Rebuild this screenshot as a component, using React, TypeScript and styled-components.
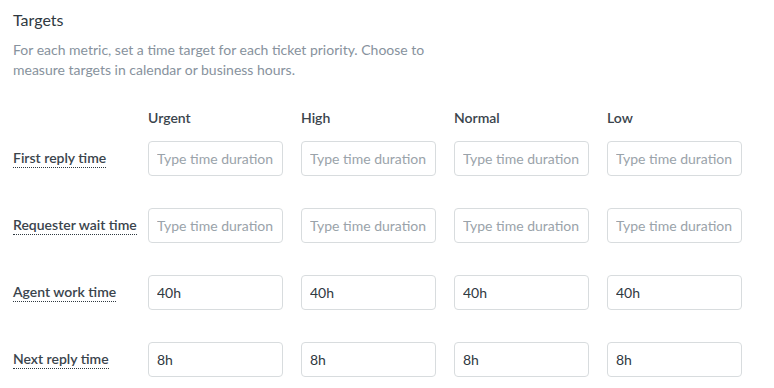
import React from 'react'
import styled, { createGlobalStyle } from 'styled-components'

const GlobalStyle = createGlobalStyle`
  body {
    margin: 0;
    background: #fff;
    font-family: Lato, "Open Sans", sans-serif;
  }
`

const Page = styled.section`
  padding: 10px 13px;
`

const Title = styled.h2`
  margin: 0;
  font-size: 16px;
  line-height: 20px;
  font-weight: 400;
  color: #2f3941;
`

const Description = styled.p`
  margin: 10px 0 0;
  width: 440px;
  font-size: 14px;
  line-height: 20px;
  color: #87929d;
`

const Grid = styled.div`
  margin-top: 29px;
  display: grid;
  grid-template-columns: 117px repeat(4, 135px);
  column-gap: 18px;
  row-gap: 32px;
  align-items: center;
`

const HeaderRow = styled.div`
  display: contents;
`

const ColumnHead = styled.div`
  font-size: 14px;
  line-height: 18px;
  font-weight: 600;
  color: #3a444c;
  margin-bottom: -18px;
`

const MetricLabel = styled.span`
  justify-self: start;
  white-space: nowrap;
  font-size: 14px;
  line-height: 18px;
  font-weight: 600;
  color: #3a444c;
  border-bottom: 1px dotted #2f3941;
`

const DurationInput = styled.input`
  box-sizing: border-box;
  width: 135px;
  height: 35px;
  padding: 0 8px;
  border: 1px solid #d8dcde;
  border-radius: 4px;
  font-family: inherit;
  font-size: 14px;
  color: #2f3941;
  outline: none;
  &::placeholder {
    color: #9aa3aa;
  }
`

const priorities = ['Urgent', 'High', 'Normal', 'Low']

const metrics = [
  { label: 'First reply time', value: '' },
  { label: 'Requester wait time', value: '' },
  { label: 'Agent work time', value: '40h' },
  { label: 'Next reply time', value: '8h' },
]

export default function App() {
  return (
    <Page>
      <GlobalStyle />
      <Title>Targets</Title>
      <Description>
        For each metric, set a time target for each ticket priority. Choose to
        measure targets in calendar or business hours.
      </Description>
      <Grid>
        <HeaderRow>
          <span />
          {priorities.map((p) => (
            <ColumnHead key={p}>{p}</ColumnHead>
          ))}
        </HeaderRow>
        {metrics.map((m) => (
          <React.Fragment key={m.label}>
            <MetricLabel>{m.label}</MetricLabel>
            {priorities.map((p) => (
              <DurationInput
                key={p}
                placeholder="Type time duration"
                defaultValue={m.value}
              />
            ))}
          </React.Fragment>
        ))}
      </Grid>
    </Page>
  )
}
